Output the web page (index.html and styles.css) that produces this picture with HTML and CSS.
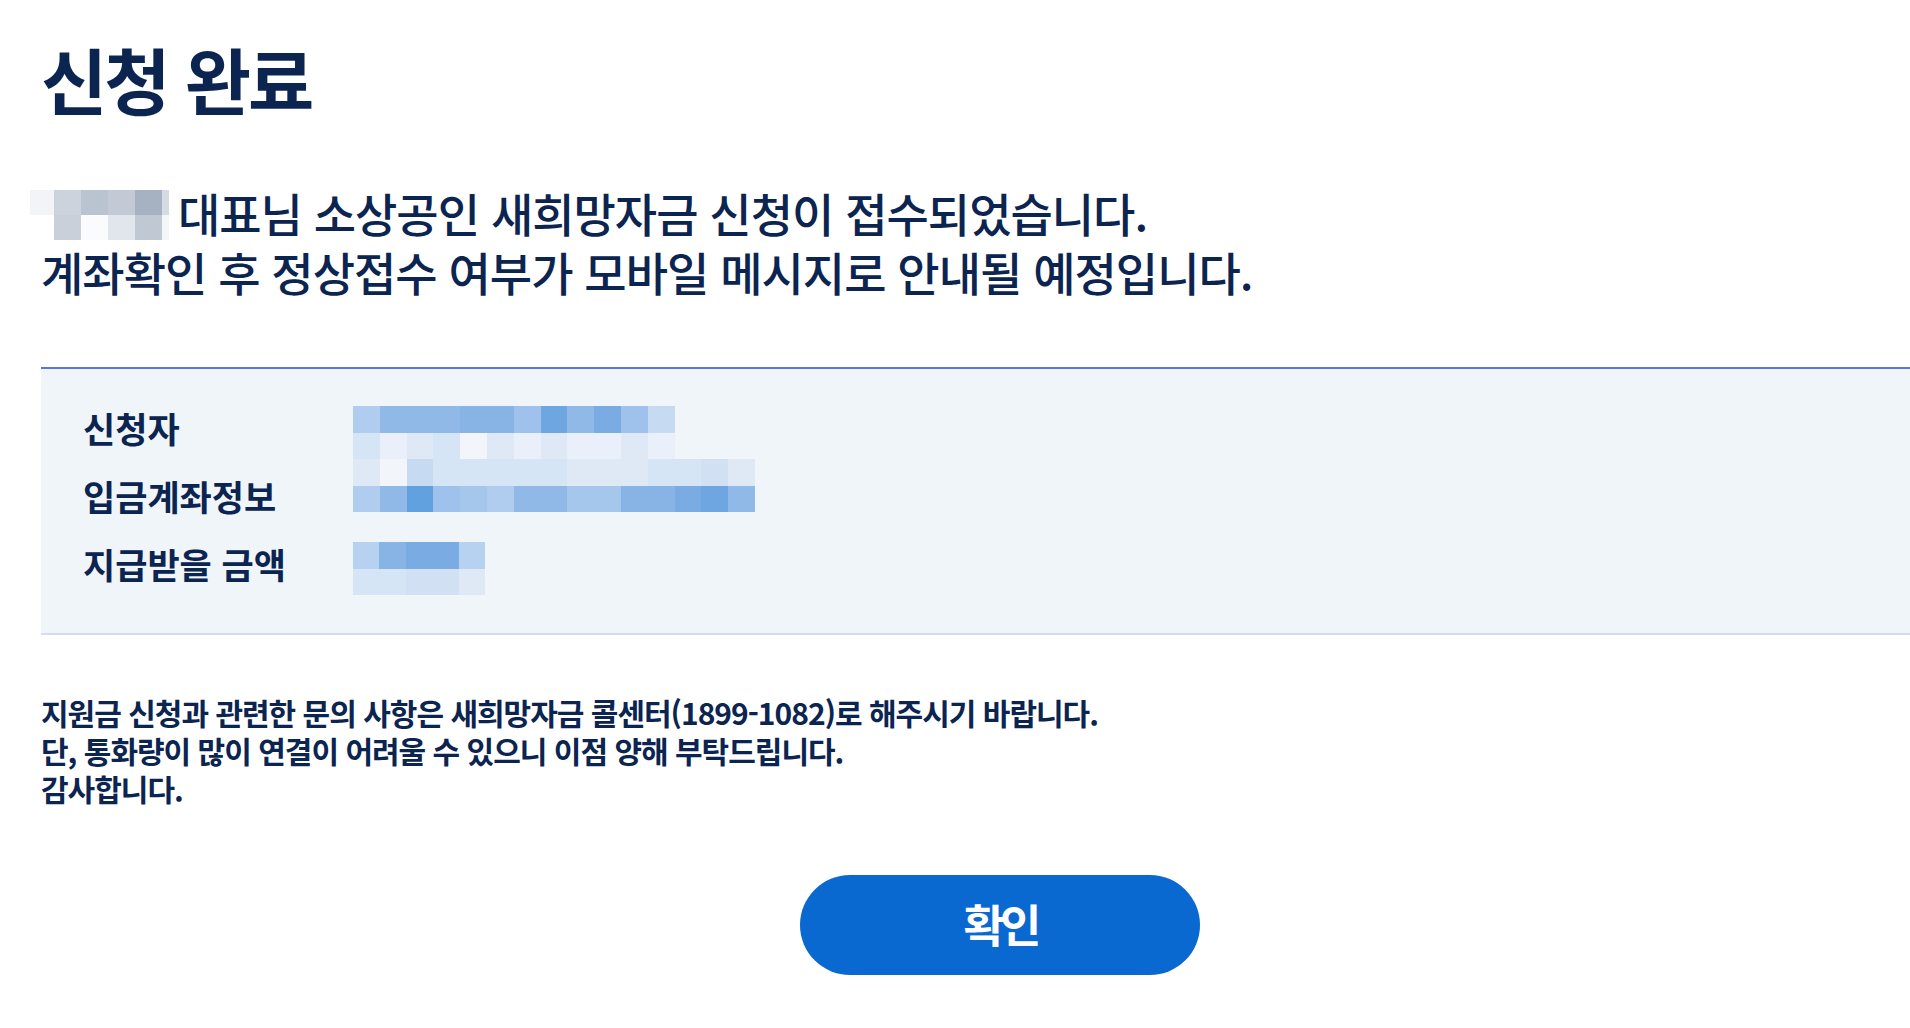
FILE: index.html
```html
<!DOCTYPE html>
<html lang="ko">
<head>
<meta charset="utf-8">
<title>신청 완료</title>
<link rel="stylesheet" href="styles.css">
</head>
<body>
<main class="page">
  <h1 class="title">신청 완료</h1>

  <p class="message">
    <span class="name-mask"><span class="mosaic mosaic-name">
      <span class="g1"></span><span class="g3"></span><span class="g4"></span><span class="g3b"></span><span class="g5"></span><span class="g2"></span>
      <span class="g0"></span><span class="g3c"></span><span class="g0b"></span><span class="g2b"></span><span class="g4b"></span><span class="g0c"></span>
    </span></span> 대표님 소상공인 새희망자금 신청이 접수되었습니다.<br>
    계좌확인 후 정상접수 여부가 모바일 메시지로 안내될 예정입니다.
  </p>

  <section class="info">
    <div class="info-row">
      <div class="info-label">신청자</div>
      <div class="mosaic mosaic-12">
        <span class="b3"></span><span class="b5"></span><span class="b5"></span><span class="b5"></span><span class="b6"></span><span class="b6"></span><span class="b4"></span><span class="b8"></span><span class="b5"></span><span class="b7"></span><span class="b4"></span><span class="b2"></span>
        <span class="l3"></span><span class="l1"></span><span class="l2"></span><span class="l3"></span><span class="l0"></span><span class="l2"></span><span class="l1"></span><span class="l2"></span><span class="l1"></span><span class="l1"></span><span class="l2"></span><span class="l1"></span>
      </div>
    </div>
    <div class="info-row">
      <div class="info-label">입금계좌정보</div>
      <div class="mosaic mosaic-15 shift-up">
        <span class="l2"></span><span class="l0"></span><span class="b2"></span><span class="l3"></span><span class="l3"></span><span class="l3"></span><span class="l3"></span><span class="l3"></span><span class="l2"></span><span class="l2"></span><span class="l2"></span><span class="l3"></span><span class="l3"></span><span class="l4"></span><span class="l2"></span>
        <span class="b3"></span><span class="b5"></span><span class="b9"></span><span class="b4"></span><span class="b3b"></span><span class="b3"></span><span class="b5"></span><span class="b5"></span><span class="b3b"></span><span class="b3b"></span><span class="b6"></span><span class="b6"></span><span class="b7"></span><span class="b8"></span><span class="b5"></span>
      </div>
    </div>
    <div class="info-row">
      <div class="info-label">지급받을 금액</div>
      <div class="mosaic mosaic-5">
        <span class="b2b"></span><span class="b6"></span><span class="b7"></span><span class="b7"></span><span class="b2b"></span>
        <span class="l3"></span><span class="l3"></span><span class="l4"></span><span class="l4"></span><span class="l2"></span>
      </div>
    </div>
  </section>

  <p class="notice">
    지원금 신청과 관련한 문의 사항은 새희망자금 콜센터(1899-1082)로 해주시기 바랍니다.<br>
    단, 통화량이 많이 연결이 어려울 수 있으니 이점 양해 부탁드립니다.<br>
    감사합니다.
  </p>

  <div class="actions">
    <button type="button" class="btn-confirm">확인</button>
  </div>
</main>
</body>
</html>
```

FILE: styles.css
```css
* {
  box-sizing: border-box;
}

html, body {
  margin: 0;
  padding: 0;
  background: #ffffff;
  overflow: hidden;
}

body {
  font-family: "Noto Sans CJK KR", "Noto Sans", sans-serif;
  color: #0b2450;
}

.page {
  padding: 35px 0 0 41px;
}

.title {
  margin: 0;
  font-size: 72px;
  font-weight: 700;
  line-height: 1.2;
  letter-spacing: -3px;
}

.message {
  margin: 62px 0 0;
  font-size: 46px;
  font-weight: 500;
  line-height: 59px;
  letter-spacing: -1px;
}

.name-mask {
  display: inline-block;
  overflow: hidden;
  vertical-align: -8px;
  margin-left: -11px;
  margin-right: -3px;
}

.mosaic {
  display: grid;
  grid-auto-rows: 26.5px;
}

.mosaic-name {
  grid-template-columns: 24px 27px 27px 27px 27px 7px;
  grid-auto-rows: 25px;
}

.mosaic-12 { grid-template-columns: repeat(12, 26.8px); }
.mosaic-15 { grid-template-columns: repeat(15, 26.8px); }
.mosaic-5 { grid-template-columns: repeat(5, 26.4px); }

.g0 { background: #ffffff; }
.g0b { background: #fafbfc; }
.g0c { background: #f4f6f8; }
.g1 { background: #f2f4f7; }
.g2 { background: #d6dbe3; }
.g2b { background: #e1e5ec; }
.g3 { background: #ccd3dd; }
.g3b { background: #c3cad5; }
.g3c { background: #c9d0da; }
.g4 { background: #bac4d0; }
.g4b { background: #c0c8d3; }
.g5 { background: #a6b1c1; }

.l0 { background: #f2f6fb; }
.l1 { background: #e9f0f9; }
.l2 { background: #dfe9f6; }
.l3 { background: #d6e5f5; }
.l4 { background: #d1e1f3; }
.b2 { background: #c6dbf2; }
.b2b { background: #b7d2f1; }
.b3 { background: #b0cdf0; }
.b3b { background: #a6c7ec; }
.b4 { background: #9ec2eb; }
.b5 { background: #91b9e7; }
.b6 { background: #87b3e5; }
.b7 { background: #7aace3; }
.b8 { background: #6ea6e1; }
.b9 { background: #62a1df; }

.info {
  margin-top: 66px;
  background: #f0f5fa;
  border-top: 2px solid #5a73e6;
  border-bottom: 2px solid #d5dcf3;
  padding: 25px 0 35px 42px;
}

.info-row {
  display: flex;
  align-items: flex-start;
  height: 68px;
}

.info-label {
  width: 270px;
  font-size: 35px;
  font-weight: 700;
  line-height: 68px;
  letter-spacing: 0;
}

.info-row .mosaic {
  margin-top: 12px;
}

.info-row .mosaic.shift-up {
  margin-top: -3px;
}

.notice {
  margin: 58px 0 0;
  font-size: 30px;
  font-weight: 700;
  line-height: 38px;
  letter-spacing: -1px;
}

.actions {
  display: flex;
  justify-content: center;
  padding-left: 49px;
  margin-top: 68px;
}

.btn-confirm {
  width: 400px;
  height: 100px;
  border: 0;
  border-radius: 50px;
  background: #0a69d0;
  color: #ffffff;
  font-family: "Noto Sans CJK KR", "Noto Sans", sans-serif;
  font-size: 45px;
  font-weight: 700;
  letter-spacing: -5px;
  padding: 0 0 4px 0;
  cursor: pointer;
}
```
